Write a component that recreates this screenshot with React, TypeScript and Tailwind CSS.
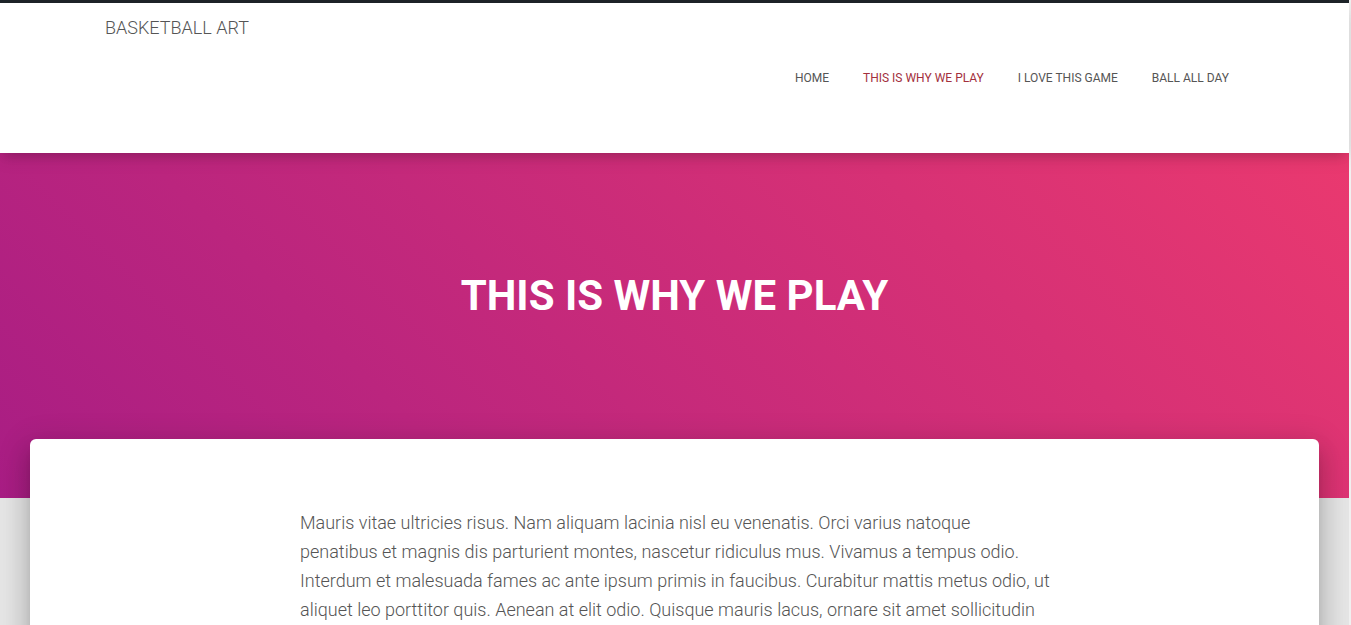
import React from "react";

const font = { fontFamily: "Roboto, 'Liberation Sans', sans-serif" };

export default function App() {
  const nav = [
    { label: "HOME", active: false },
    { label: "THIS IS WHY WE PLAY", active: true },
    { label: "I LOVE THIS GAME", active: false },
    { label: "BALL ALL DAY", active: false },
  ];
  return (
    <div className="flex h-[625px] w-[1351px] overflow-hidden bg-[#e5e5e5]" style={font}>
      <div className="relative flex w-[1349px] flex-col">
        <div className="h-[3px] shrink-0 bg-[#1e2429]" />
        <header className="relative z-20 flex h-[150px] shrink-0 flex-col bg-white shadow-[0_4px_18px_0_rgba(0,0,0,0.12),0_7px_10px_-5px_rgba(0,0,0,0.15)]">
          <div className="pl-[105px] pt-[14px] text-[18px] font-light leading-[22px] text-[#555]">
            BASKETBALL ART
          </div>
          <nav className="mt-[31px] flex justify-end pr-[120px]">
            <ul className="flex gap-[34px]">
              {nav.map((n) => (
                <li
                  key={n.label}
                  className={`text-[12px] leading-[16px] ${n.active ? "text-[#a3303d]" : "text-[#555]"}`}
                >
                  {n.label}
                </li>
              ))}
            </ul>
          </nav>
        </header>
        <section className="flex h-[345px] shrink-0 items-center justify-center bg-[linear-gradient(45deg,#a81d84_0%,#ea396f_100%)]">
          <h1 className="mt-[-59px] text-[42px] font-bold leading-[52px] text-white">THIS IS WHY WE PLAY</h1>
        </section>
        <main className="relative z-10 mx-[30px] mt-[-59px] shrink-0 grow rounded-t-[6px] bg-white pt-[69px] shadow-[0_16px_24px_2px_rgba(0,0,0,0.14),0_6px_30px_5px_rgba(0,0,0,0.12),0_8px_10px_-5px_rgba(0,0,0,0.2)]">
          <p className="ml-[270px] w-[752px] text-[18px] font-light leading-[29px] text-[#555]">
            Mauris vitae ultricies risus. Nam aliquam lacinia nisl eu venenatis. Orci varius natoque penatibus et magnis dis parturient montes, nascetur ridiculus mus. Vivamus a tempus odio. Interdum et malesuada fames ac ante ipsum primis in faucibus. Curabitur mattis metus odio, ut aliquet leo porttitor quis. Aenean at elit odio. Quisque mauris lacus, ornare sit amet sollicitudin vel, tincidunt vel nulla. Nulla facilisi. Sed at dictum lorem, ut ullamcorper nisi.
          </p>
        </main>
      </div>
      <div className="w-[2px] bg-[#f1f1f1]" />
    </div>
  );
}
